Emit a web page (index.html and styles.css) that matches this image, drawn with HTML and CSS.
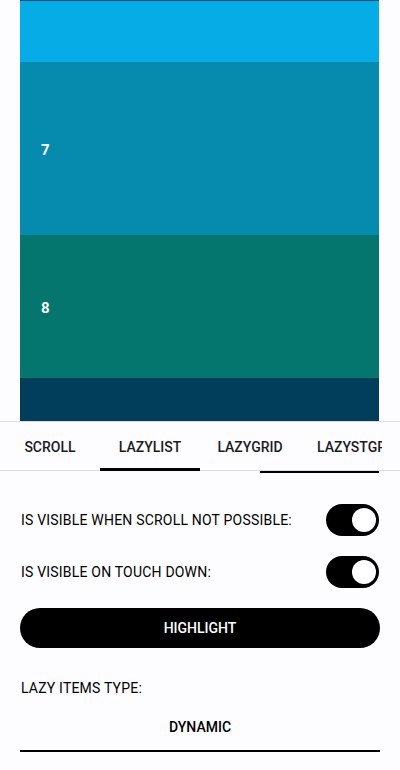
FILE: index.html
```html
<!DOCTYPE html>
<html>
<head>
<meta charset="utf-8">
<link rel="stylesheet" href="styles.css">
</head>
<body>
<div class="screen">
  <div class="list-area">
    <div class="item item-5"></div>
    <div class="item item-6"></div>
    <div class="item item-7"><span class="num">7</span></div>
    <div class="item item-8"><span class="num">8</span></div>
    <div class="item item-9"></div>
  </div>
  <div class="tabs">
    <div class="tab-strip">
      <div class="tab">SCROLL</div>
      <div class="tab selected">LAZYLIST</div>
      <div class="tab">LAZYGRID</div>
      <div class="tab wide">LAZYSTGRID</div>
    </div>
    <div class="indicator ind-a"></div>
    <div class="indicator ind-b"></div>
  </div>
  <div class="controls">
    <div class="row row-first">
      <span class="label">IS VISIBLE WHEN SCROLL NOT POSSIBLE:</span>
      <span class="switch"><span class="thumb"></span></span>
    </div>
    <div class="row">
      <span class="label">IS VISIBLE ON TOUCH DOWN:</span>
      <span class="switch"><span class="thumb"></span></span>
    </div>
    <div class="button">HIGHLIGHT</div>
    <div class="type-label">LAZY ITEMS TYPE:</div>
    <div class="dropdown">DYNAMIC</div>
  </div>
</div>
</body>
</html>
```

FILE: styles.css
```css
html, body {
  margin: 0;
  padding: 0;
  background: #fdfcff;
}
.screen {
  width: 400px;
  height: 770px;
  overflow: hidden;
  font-family: Roboto, "Liberation Sans", sans-serif;
  color: #1b1b1f;
  display: flex;
  flex-direction: column;
}
.list-area {
  height: 421px;
  padding: 0 21px 0 20px;
  display: flex;
  flex-direction: column;
  overflow: hidden;
  border-bottom: 1px solid #dcdbe0;
}
.item {
  flex: none;
  position: relative;
  display: flex;
  align-items: center;
  padding-left: 21px;
}
.item-5 { height: 1px; background: #0a4f6e; }
.item-6 { height: 61px; background: #05ace6; }
.item-7 { height: 173px; background: #068aae; }
.item-8 { height: 143px; background: #04766e; }
.item-9 { height: 43px; background: #013e5c; }
.num {
  color: #ffffff;
  font-weight: 700;
  font-size: 15px;
}
.item-7 .num { margin-top: 3px; }
.item-8 .num { margin-top: 3px; }
.tabs {
  position: relative;
  height: 48px;
  border-bottom: 1px solid #dcdbe0;
}
.tab-strip {
  width: 382px;
  height: 48px;
  display: flex;
  overflow: hidden;
}
.tab {
  flex: none;
  width: 100px;
  display: flex;
  align-items: center;
  justify-content: center;
  font-size: 14px;
  font-weight: 500;
  color: #1b1b1f;
  padding-top: 2px;
  box-sizing: border-box;
}
.tab.wide {
  width: auto;
  justify-content: flex-start;
  padding-left: 17px;
  padding-right: 16px;
}
.indicator {
  position: absolute;
  height: 3px;
  background: #000000;
}
.ind-a { left: 100px; width: 100px; top: 46px; }
.ind-b { left: 260px; width: 119px; top: 49px; height: 2px; }
.controls {
  padding: 0 20px 0 21px;
  display: flex;
  flex-direction: column;
}
.row {
  display: flex;
  align-items: center;
  justify-content: space-between;
  height: 33px;
  margin-top: 19px;
}
.row-first { margin-top: 32px; }
.label {
  font-size: 14px;
  letter-spacing: 0.2px;
  color: #000000;
}
.switch {
  width: 53px;
  height: 32px;
  border-radius: 16px;
  background: #000000;
  display: flex;
  align-items: center;
  justify-content: flex-end;
  padding-right: 3px;
  box-sizing: border-box;
  margin-right: 1px;
}
.thumb {
  width: 24px;
  height: 24px;
  border-radius: 50%;
  background: #ffffff;
}
.button {
  margin-top: 20px;
  margin-left: -1px;
  height: 40px;
  border-radius: 20px;
  background: #000000;
  color: #ffffff;
  font-size: 14px;
  font-weight: 500;
  display: flex;
  align-items: center;
  justify-content: center;
}
.type-label {
  margin-top: 30px;
  font-size: 14px;
  letter-spacing: 0.2px;
  color: #000000;
  line-height: 20px;
}
.dropdown {
  margin-top: 18px;
  margin-left: -1px;
  height: 36px;
  box-sizing: border-box;
  border-bottom: 2px solid #000000;
  font-size: 14px;
  font-weight: 500;
  color: #000000;
  text-align: center;
  line-height: 20px;
  padding-top: 1px;
}
```
